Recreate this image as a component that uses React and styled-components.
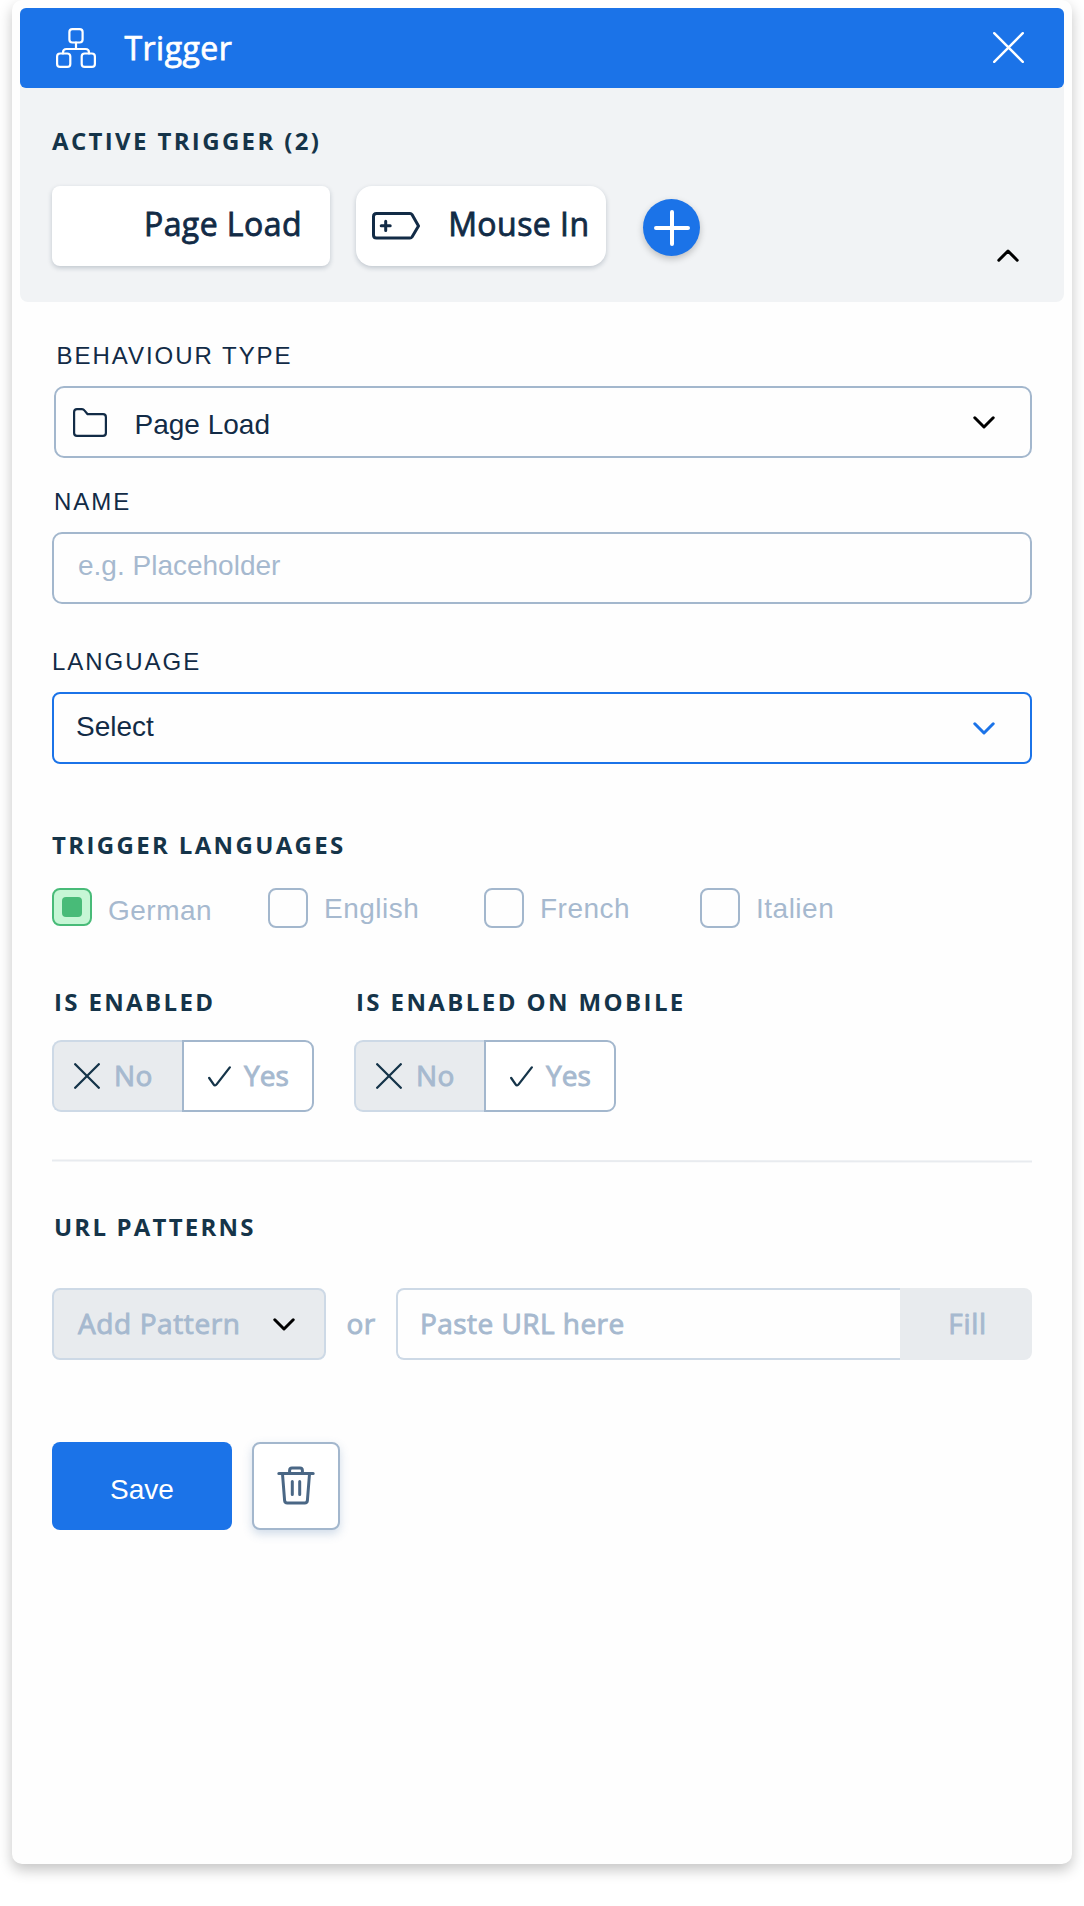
import React from "react";
import styled, { createGlobalStyle } from "styled-components";

const sans = '"Liberation Sans", Arial, sans-serif';
const open = '"Open Sans", "Noto Sans", sans-serif';

const c = {
  blue: "#1b73e8",
  ink: "#122b46",
  heading: "#153449",
  line: "#a3b7cd",
  lineSoft: "#cdd9e6",
  muted: "#a6b9cf",
  fill: "#e8ebee",
  surface: "#f1f3f5",
};

const GlobalStyle = createGlobalStyle`
  *, *::before, *::after { box-sizing: border-box; }
  body { margin: 0; background: #fff; overflow: hidden; }
  button { margin: 0; padding: 0; border: 0; background: none; font: inherit; }
  svg { display: block; flex: none; fill: none; stroke: currentColor; stroke-linecap: round; stroke-linejoin: round; }
`;

const Page = styled.div`
  height: 1906px;
  padding: 0 12px 42px;
`;

const Panel = styled.main`
  height: 100%;
  padding: 8px 8px 0;
  border-radius: 10px;
  background: #fefefe;
  box-shadow: 0 6px 14px rgba(0, 0, 0, 0.23);
`;

const Top = styled.section`
  height: 294px;
  border-radius: 6px 6px 8px 8px;
  background: ${c.surface};
`;

const Header = styled.header`
  display: flex;
  align-items: center;
  height: 80px;
  padding: 0 40px 0 36px;
  border-radius: 6px;
  background: ${c.blue};
  color: #fff;
`;

const Title = styled.h1`
  flex: 1;
  margin: 0 0 0 28.5px;
  font: 500 32px/44px ${open};
  letter-spacing: 0.45px;
  -webkit-text-stroke: 0.75px currentColor;
`;

const IconButton = styled.button`
  display: flex;
  margin-top: -1px;
  color: inherit;
`;

const Heading = styled.h2`
  margin: ${(p) => p.$top || 0}px 0 0 ${(p) => p.$left || 0}px;
  font: 700 24px/32px ${open};
  letter-spacing: ${(p) => p.$spacing || 2.35}px;
  color: ${c.heading};
  white-space: nowrap;
`;

const Active = styled.div`
  padding: 37px 45px 0 32px;
`;

const Chips = styled.div`
  display: flex;
  margin-top: 29px;
`;

const Chip = styled.button`
  display: flex;
  align-items: center;
  justify-content: space-between;
  width: ${(p) => p.$width}px;
  height: 80px;
  margin-right: ${(p) => p.$after}px;
  padding: 0 ${(p) => p.$right}px 0 16px;
  border-radius: ${(p) => p.$radius}px;
  background: #fff;
  box-shadow: 0 2px 5px rgba(18, 43, 70, 0.22);
  color: ${c.ink};
`;

const ChipText = styled.span`
  margin-left: auto;
  padding-bottom: 5px;
  font: 500 32px/44px ${open};
  letter-spacing: 0.45px;
  -webkit-text-stroke: 0.8px currentColor;
  white-space: nowrap;
`;

const AddButton = styled.button`
  display: flex;
  align-items: center;
  justify-content: center;
  width: 57px;
  height: 57px;
  margin-top: 13px;
  border-radius: 50%;
  background: ${c.blue};
  color: #fff;
  box-shadow: 0 3px 7px rgba(0, 0, 0, 0.22);
`;

const Collapse = styled.button`
  display: flex;
  margin: 63px 0 0 auto;
  color: #000;
`;

const Form = styled.div`
  display: flex;
  flex-direction: column;
  padding: 40px 32px 0;
`;

const Label = styled.label`
  margin: ${(p) => p.$top || 0}px 0 16px ${(p) => p.$left || 0}px;
  font: 400 24px/28px ${sans};
  letter-spacing: 1.97px;
  color: ${c.ink};
`;

const Field = styled.div`
  display: flex;
  align-items: center;
  height: 72px;
  margin-left: ${(p) => p.$left || 0}px;
  padding: 0 35px 0 ${(p) => p.$pad || 24}px;
  border: 2px solid ${(p) => (p.$focus ? c.blue : c.line)};
  border-radius: ${(p) => (p.$focus ? 8 : 10)}px;
  color: ${(p) => (p.$focus ? c.blue : "#000")};
`;

const FieldIcon = styled.span`
  color: ${c.ink};
`;

const FieldText = styled.span`
  flex: 1;
  margin-left: ${(p) => p.$left || 0}px;
  padding-top: ${(p) => p.$drop || 0}px;
  padding-bottom: ${(p) => p.$lift || 0}px;
  font: 400 28px/32px ${sans};
  color: ${(p) => (p.$muted ? c.muted : c.ink)};
`;

const Checks = styled.div`
  display: grid;
  grid-template-columns: repeat(4, 216px);
  height: 40px;
  margin-top: 27px;
`;

const Check = styled.label`
  display: flex;
  align-items: flex-start;
`;

const Box = styled.span`
  display: flex;
  align-items: flex-start;
  justify-content: center;
  width: 40px;
  height: ${(p) => (p.$on ? 38 : 40)}px;
  padding-top: 7px;
  border: 2px solid ${(p) => (p.$on ? "#48bb78" : c.line)};
  border-radius: 8px;
  background: ${(p) => (p.$on ? "#c6f6d5" : "transparent")};
`;

const Dot = styled.span`
  width: 20px;
  height: 20px;
  border-radius: 4px;
  background: #48bb78;
`;

const CheckText = styled.span`
  margin: ${(p) => (p.$on ? 7 : 5)}px 0 0 16px;
  font: 400 28px/32px ${sans};
  letter-spacing: 0.5px;
  color: ${c.muted};
`;

const Groups = styled.div`
  display: flex;
  gap: 40px;
  margin-top: 58px;
`;

const Group = styled.div`
  width: 262px;
`;

const Toggle = styled.div`
  display: flex;
  height: 72px;
  margin-top: 22px;
`;

const Option = styled.button`
  display: flex;
  align-items: center;
  width: ${(p) => (p.$on ? 132 : 130)}px;
  padding-left: ${(p) => (p.$on ? 24 : 20)}px;
  border: 2px solid ${(p) => (p.$on ? c.line : c.lineSoft)};
  border-right-width: ${(p) => (p.$on ? 2 : 0)}px;
  border-radius: ${(p) => (p.$on ? "0 9px 9px 0" : "9px 0 0 9px")};
  background: ${(p) => (p.$on ? "#fff" : c.fill)};
  color: ${c.heading};
`;

const Soft = styled.span`
  margin-left: ${(p) => p.$left || 0}px;
  padding-bottom: 3px;
  font: 500 28px/36px ${open};
  letter-spacing: ${(p) => p.$spacing || 0.45}px;
  -webkit-text-stroke: 0.9px currentColor;
  color: ${c.muted};
  white-space: nowrap;
`;

const Rule = styled.svg`
  margin-top: 47px;
  color: #e8ebef;
`;

const UrlRow = styled.div`
  display: flex;
  align-items: center;
  height: 72px;
  margin-top: 45px;
`;

const AddPattern = styled.button`
  display: flex;
  align-items: center;
  justify-content: space-between;
  width: 274px;
  height: 72px;
  padding: 0 29px 0 24px;
  border: 2px solid ${c.lineSoft};
  border-radius: 8px;
  background: ${c.fill};
  color: #000;
`;

const Or = styled.div`
  display: flex;
  justify-content: center;
  width: 70px;
`;

const UrlInput = styled.div`
  display: flex;
  align-items: center;
  flex: 1;
  height: 72px;
  padding-left: 22px;
  border: 2px solid ${c.lineSoft};
  border-right: 0;
  border-radius: 8px 0 0 8px;
`;

const Fill = styled.button`
  display: flex;
  align-items: center;
  justify-content: center;
  width: 132px;
  height: 72px;
  padding-left: 3px;
  border-radius: 0 8px 8px 0;
  background: ${c.fill};
`;

const Actions = styled.div`
  display: flex;
  gap: 20px;
  margin-top: 82px;
`;

const Save = styled.button`
  width: 180px;
  height: 88px;
  padding-top: 8px;
  border-radius: 8px;
  background: ${c.blue};
  color: #fff;
  font: 400 28px/32px ${sans};
`;

const Delete = styled.button`
  display: flex;
  align-items: center;
  justify-content: center;
  width: 88px;
  height: 88px;
  border: 2px solid ${c.line};
  border-radius: 8px;
  background: #fff;
  color: #4a6785;
  box-shadow: 0 4px 10px rgba(74, 120, 170, 0.25);
`;

const Chevron = ({ up }) => (
  <svg width="22" height="13" viewBox="0 0 22 13" strokeWidth="3">
    <path d={up ? "M1.8 11.2 11 2l9.2 9.2" : "M1.8 1.8 11 11l9.2-9.2"} />
  </svg>
);

const Cross = ({ size, weight }) => (
  <svg width={size} height={size} strokeWidth={weight}>
    <path d={`M1.2 1.2 ${size - 1.2} ${size - 1.2}M${size - 1.2} 1.2 1.2 ${size - 1.2}`} />
  </svg>
);

const Tree = () => (
  <svg width="40" height="40" viewBox="0 0 40 40" strokeWidth="2.2">
    <rect x="13.4" y="1.1" width="13.2" height="13.4" rx="3" />
    <rect x="1.1" y="25.5" width="13.2" height="13.4" rx="3" />
    <rect x="25.7" y="25.5" width="13.2" height="13.4" rx="3" />
    <path d="M20 14.5V21M7 25.5V24.5Q7 21 10.5 21H29.5Q33 21 33 24.5V25.5" />
  </svg>
);

const Tag = () => (
  <svg width="48" height="28" viewBox="0 0 48 28" strokeWidth="3">
    <path d="M4.5 1.5H38Q39.3 1.5 40 2.5L46.5 14 40 25Q39.3 26 38 26H4.5Q1.5 26 1.5 23V4.5Q1.5 1.5 4.5 1.5Z" />
    <path d="M9.2 13.8H18.2M13.7 9.2V18.4" />
  </svg>
);

const Folder = () => (
  <svg width="34" height="29" viewBox="0 0 34 29" strokeWidth="2.2">
    <path d="M1.1 4Q1.1 1.2 4 1.2H9Q10.5 1.2 11.4 2.4L14.6 6.2H30Q32.9 6.2 32.9 9.2V25Q32.9 27.9 30 27.9H4Q1.1 27.9 1.1 25Z" />
  </svg>
);

const CheckMark = () => (
  <svg width="23" height="21" viewBox="0 0 23 21" strokeWidth="2.3">
    <path d="M1.2 12 5.6 18.3Q7 20.4 8.6 18.4L21.8 1.4" />
  </svg>
);

const Trash = () => (
  <svg width="38" height="41" viewBox="0 0 38 41" strokeWidth="3">
    <path d="M1.8 7.5H36.2M12.6 7V4.5Q12.6 2 15 2H23Q25.4 2 25.4 4.5V7M5.5 8 7.6 34.5Q7.9 37 10.2 37H27.8Q30.1 37 30.4 34.5L32.5 8M15.3 15.5V28.5M22.7 15.5V28.5" />
  </svg>
);

const YesNo = () => (
  <Toggle>
    <Option>
      <Cross size={26} weight={2.3} />
      <Soft $left={14}>No</Soft>
    </Option>
    <Option $on>
      <CheckMark />
      <Soft $left={13} $spacing={0.1}>Yes</Soft>
    </Option>
  </Toggle>
);

const languages = ["German", "English", "French", "Italien"];

export default function App() {
  return (
    <Page>
      <GlobalStyle />
      <Panel>
        <Top>
          <Header>
            <Tree />
            <Title>Trigger</Title>
            <IconButton aria-label="Close">
              <Cross size={31} weight={2.4} />
            </IconButton>
          </Header>
          <Active>
            <Heading>ACTIVE TRIGGER (2)</Heading>
            <Chips>
              <Chip $width={278} $after={26} $right={28} $radius={8}>
                <ChipText>Page Load</ChipText>
              </Chip>
              <Chip $width={250} $after={37} $right={16.5} $radius={16}>
                <Tag />
                <ChipText>Mouse In</ChipText>
              </Chip>
              <AddButton aria-label="Add trigger">
                <svg width="36" height="36" strokeWidth="4">
                  <path d="M18 2V34M2 18H34" />
                </svg>
              </AddButton>
              <Collapse aria-label="Collapse">
                <Chevron up />
              </Collapse>
            </Chips>
          </Active>
        </Top>
        <Form>
          <Label $left={4.5}>BEHAVIOUR TYPE</Label>
          <Field $left={2} $pad={17}>
            <FieldIcon>
              <Folder />
            </FieldIcon>
            <FieldText $left={27.5} $drop={5}>Page Load</FieldText>
            <Chevron />
          </Field>
          <Label $top={30} $left={2}>NAME</Label>
          <Field>
            <FieldText $muted $lift={4}>e.g. Placeholder</FieldText>
          </Field>
          <Label $top={44}>LANGUAGE</Label>
          <Field $focus $pad={22}>
            <FieldText $lift={3}>Select</FieldText>
            <Chevron />
          </Field>

          <Heading $top={65}>TRIGGER LANGUAGES</Heading>
          <Checks>
            {languages.map((name, i) => (
              <Check key={name}>
                <Box $on={i === 0}>{i === 0 && <Dot />}</Box>
                <CheckText $on={i === 0}>{name}</CheckText>
              </Check>
            ))}
          </Checks>

          <Groups>
            <Group>
              <Heading $left={2}>IS ENABLED</Heading>
              <YesNo />
            </Group>
            <Group>
              <Heading $left={2} $spacing={2.4}>IS ENABLED ON MOBILE</Heading>
              <YesNo />
            </Group>
          </Groups>

          <Rule width="980" height="4" strokeWidth="2">
            <path d="M0 1.5 980 2.5" />
          </Rule>

          <Heading $top={48} $left={2} $spacing={2.2}>URL PATTERNS</Heading>
          <UrlRow>
            <AddPattern>
              <Soft $spacing={0.6}>Add Pattern</Soft>
              <Chevron />
            </AddPattern>
            <Or>
              <Soft>or</Soft>
            </Or>
            <UrlInput>
              <Soft>Paste URL here</Soft>
            </UrlInput>
            <Fill>
              <Soft $spacing={0.7}>Fill</Soft>
            </Fill>
          </UrlRow>

          <Actions>
            <Save>Save</Save>
            <Delete aria-label="Delete">
              <Trash />
            </Delete>
          </Actions>
        </Form>
      </Panel>
    </Page>
  );
}
